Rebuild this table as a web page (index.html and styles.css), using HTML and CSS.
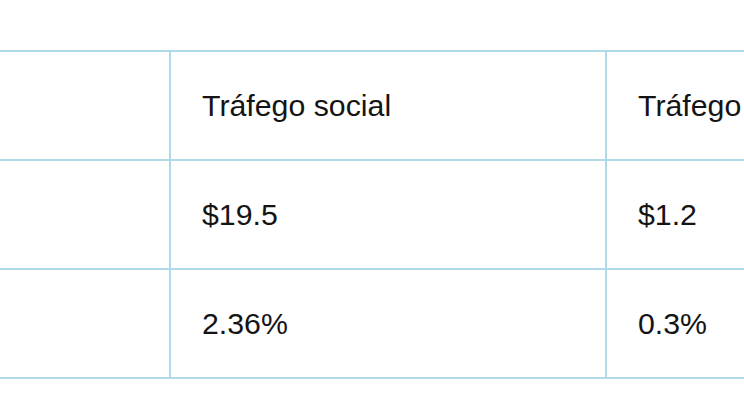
FILE: index.html
```html
<!DOCTYPE html>
<html lang="pt">
<head>
<meta charset="utf-8">
<title>Tráfego</title>
<link rel="stylesheet" href="styles.css">
</head>
<body>
<div class="wrap">
  <table class="data">
    <colgroup>
      <col class="c1">
      <col class="c2">
      <col class="c3">
    </colgroup>
    <tr>
      <td></td>
      <td>Tráfego social</td>
      <td>Tráfego</td>
    </tr>
    <tr>
      <td></td>
      <td>$19.5</td>
      <td>$1.2</td>
    </tr>
    <tr>
      <td></td>
      <td>2.36%</td>
      <td>0.3%</td>
    </tr>
  </table>
</div>
</body>
</html>
```
FILE: styles.css
```css
html, body {
  margin: 0;
  padding: 0;
  background: #fff;
  overflow: hidden;
}
.wrap {
  width: 744px;
  height: 420px;
  overflow: hidden;
  padding-top: 50px;
  box-sizing: border-box;
}
.data {
  border-collapse: collapse;
  table-layout: fixed;
  width: 1000px;
  font-family: "Liberation Sans", Arial, sans-serif;
  font-size: 30.3px;
  line-height: 35px;
  color: #141414;
}
.c1 { width: 170px; }
.c2 { width: 436px; }
.c3 { width: 394px; }
.data td {
  border: 2px solid #b0dae8;
  padding: 36px 30px 36px 31px;
  white-space: nowrap;
  overflow: hidden;
  vertical-align: middle;
}
.data td:first-child {
  border-left: 0;
}
```
